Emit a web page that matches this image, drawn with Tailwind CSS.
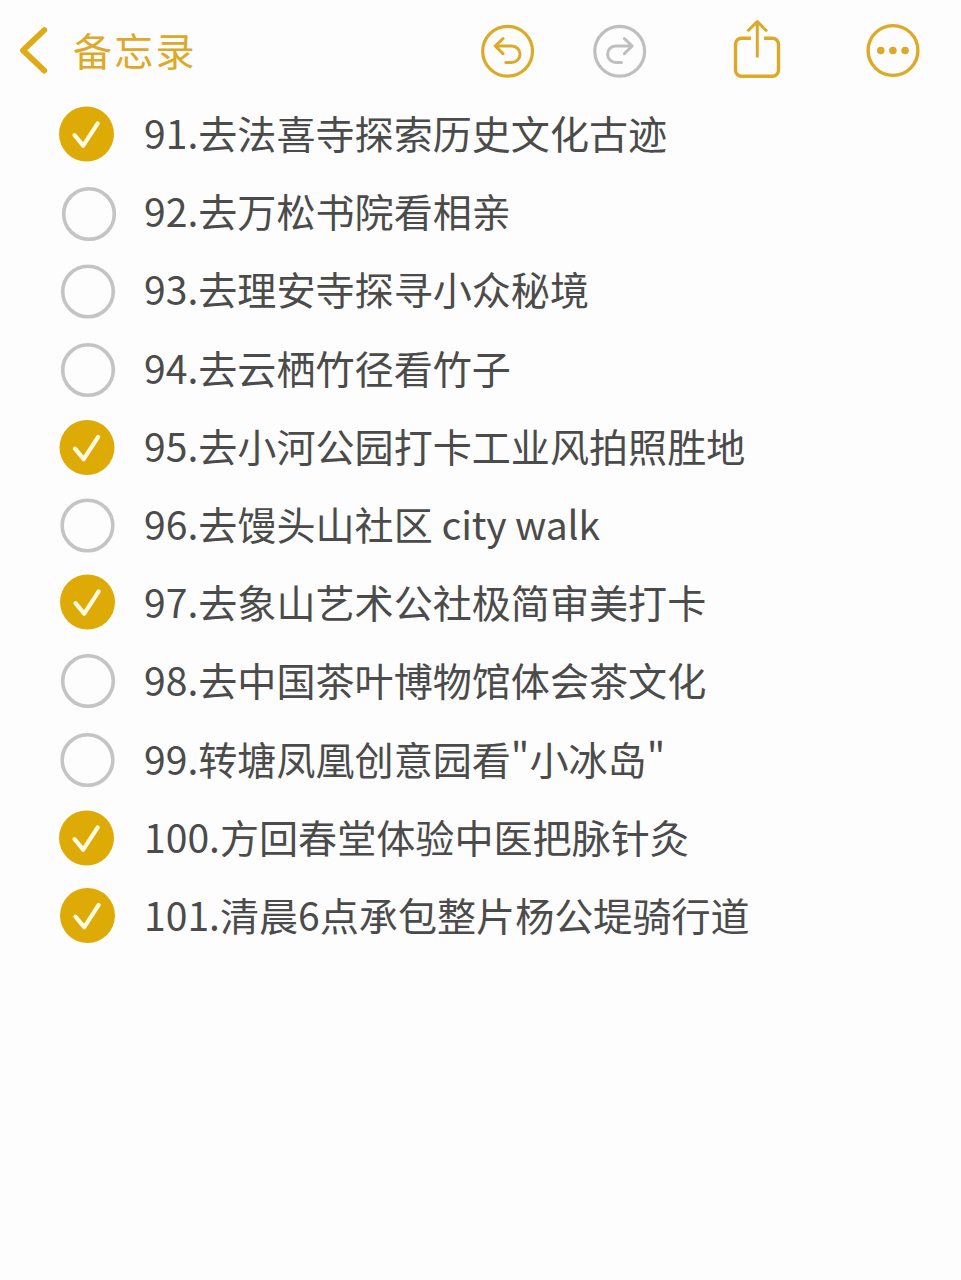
<!DOCTYPE html>
<html lang="zh-CN">

<head>
    <meta charset="UTF-8">
    <meta name="viewport" content="width=device-width, initial-scale=1.0">
    <title>备忘录</title>
    <script src="https://cdn.jsdelivr.net/npm/@tailwindcss/browser@4"></script>
</head>

<body class="bg-[#fdfdfd] font-['Noto_Sans_CJK_SC',sans-serif]">
    <!-- shared checkbox shapes -->
    <svg class="hidden">
        <symbol id="checked" viewBox="0 0 56 56">
            <circle cx="28" cy="28" r="27.5" fill="#deab06" />
            <path d="M16 28.6 24.7 39 39.2 16.8" transform="translate(0 .6)" fill="none" stroke="#fffbe0" stroke-width="4.2" stroke-linecap="round" stroke-linejoin="round" />
        </symbol>
        <symbol id="empty" viewBox="0 0 56 56">
            <circle cx="28" cy="28" r="25.3" fill="none" stroke="#c4c4c4" stroke-width="3.6" />
        </symbol>
    </svg>

    <div class="w-[961px] h-[1280px] overflow-hidden">
        <header class="flex items-center h-[95px] pt-[6px] pl-[18px] pr-[40px] text-[#dcaa28]">
            <div class="flex items-center">
                <svg class="w-8 h-[52px]" viewBox="0 0 32 52" fill="none" stroke="#e0a916" stroke-width="5.8" stroke-linecap="round" stroke-linejoin="round">
                    <path d="M26.3 5 5 25.4 26.3 45.6" />
                </svg>
                <h1 class="ml-[23px] -mt-[4px] text-[39px] leading-[56px] tracking-[2.2px]">备忘录</h1>
            </div>
            <div class="flex items-center ml-auto">
                <svg class="w-14 h-14" viewBox="0 0 56 56" fill="none" stroke="currentColor" stroke-width="3.2" stroke-linecap="round" stroke-linejoin="round">
                    <circle cx="28.6" cy="28.2" r="24.9" />
                    <path d="M24 15.6 16.2 23 24 30.6M16.4 23H32.8a8 8 0 0 1 0 16.4H26.8" stroke-width="3" />
                </svg>
                <svg class="w-14 h-14 ml-[56px] text-[#bfbfbf]" viewBox="0 0 56 56" fill="none" stroke="currentColor" stroke-width="3.2" stroke-linecap="round" stroke-linejoin="round">
                    <circle cx="28.7" cy="28.2" r="24.9" />
                    <path d="M33.4 15.6 41.2 23 33.4 30.6M41 23H24.8a8 8 0 0 0 0 16.4H30.4" stroke-width="3" />
                </svg>
                <svg class="w-[52px] h-[62px] ml-[84px] -mt-[4px]" viewBox="0 0 52 62" fill="none" stroke="currentColor" stroke-width="3.4" stroke-linejoin="round">
                    <path d="M20 20.2H10.5a6 6 0 0 0-6 6V52.3a6 6 0 0 0 6 6H41.500a6 6 0 0 0 6-6V26.200a6 6 0 0 0-6-6H33" />
                    <path d="M26.300 39.500V4M16.500 13.200 26.300 3.600 36 13.200" stroke-width="3" />
                </svg>
                <svg class="w-14 h-14 ml-[82px]" viewBox="0 0 56 56">
                    <circle cx="28" cy="27.5" r="24.9" fill="none" stroke="currentColor" stroke-width="3.4" />
                    <g fill="currentColor">
                        <circle cx="15.8" cy="27.5" r="3.8" />
                        <circle cx="27.9" cy="27.5" r="3.8" />
                        <circle cx="40.1" cy="27.5" r="3.8" />
                    </g>
                </svg>
            </div>
        </header>

        <ul class="grid auto-rows-[78.2px] text-[39.1px] leading-[78px] text-[#4b4b4b] whitespace-nowrap">
            <li class="flex items-center gap-[28px] pl-[60px]">
                <svg class="size-14 -translate-x-[1.5px]"><use href="#checked" /></svg>
                <span class="-mt-[4px]">91.去法喜寺探索历史文化古迹</span>
            </li>
            <li class="flex items-center gap-[28px] pl-[60px]">
                <svg class="size-14 translate-x-[1px] translate-y-[2px]"><use href="#empty" /></svg>
                <span class="-mt-[4px]">92.去万松书院看相亲</span>
            </li>
            <li class="flex items-center gap-[28px] pl-[60px]">
                <svg class="size-14 translate-y-[1.5px]"><use href="#empty" /></svg>
                <span class="-mt-[4px]">93.去理安寺探寻小众秘境</span>
            </li>
            <li class="flex items-center gap-[28px] pl-[60px]">
                <svg class="size-14 translate-y-[1px]"><use href="#empty" /></svg>
                <span class="-mt-[4px]">94.去云栖竹径看竹子</span>
            </li>
            <li class="flex items-center gap-[28px] pl-[60px]">
                <svg class="size-14 -translate-x-[1px] translate-y-[0.5px]"><use href="#checked" /></svg>
                <span class="-mt-[4px]">95.去小河公园打卡工业风拍照胜地</span>
            </li>
            <li class="flex items-center gap-[28px] pl-[60px]">
                <svg class="size-14 -translate-x-[0.5px] translate-y-[0.5px]"><use href="#empty" /></svg>
                <span class="-mt-[4px]">96.去馒头山社区 <span class="tracking-[-0.2px]">city walk</span></span>
            </li>
            <li class="flex items-center gap-[28px] pl-[60px]">
                <svg class="size-14 -translate-x-[0.5px] -translate-y-[1px]"><use href="#checked" /></svg>
                <span class="-mt-[4px]">97.去象山艺术公社极简审美打卡</span>
            </li>
            <li class="flex items-center gap-[28px] pl-[60px]">
                <svg class="size-14"><use href="#empty" /></svg>
                <span class="-mt-[4px]">98.去中国茶叶博物馆体会茶文化</span>
            </li>
            <li class="flex items-center gap-[28px] pl-[60px]">
                <svg class="size-14 -translate-x-[0.5px]"><use href="#empty" /></svg>
                <span class="-mt-[4px]">99.转塘凤凰创意园看"小冰岛"</span>
            </li>
            <li class="flex items-center gap-[28px] pl-[60px]">
                <svg class="size-14 -translate-x-[1.5px]"><use href="#checked" /></svg>
                <span class="-mt-[4px]">100.方回春堂体验中医把脉针灸</span>
            </li>
            <li class="flex items-center gap-[28px] pl-[60px]">
                <svg class="size-14 -translate-x-[0.5px] -translate-y-[0.5px]"><use href="#checked" /></svg>
                <span class="-mt-[4px]">101.清晨6点承包整片杨公堤骑行道</span>
            </li>
        </ul>
    </div>
</body>

</html>
